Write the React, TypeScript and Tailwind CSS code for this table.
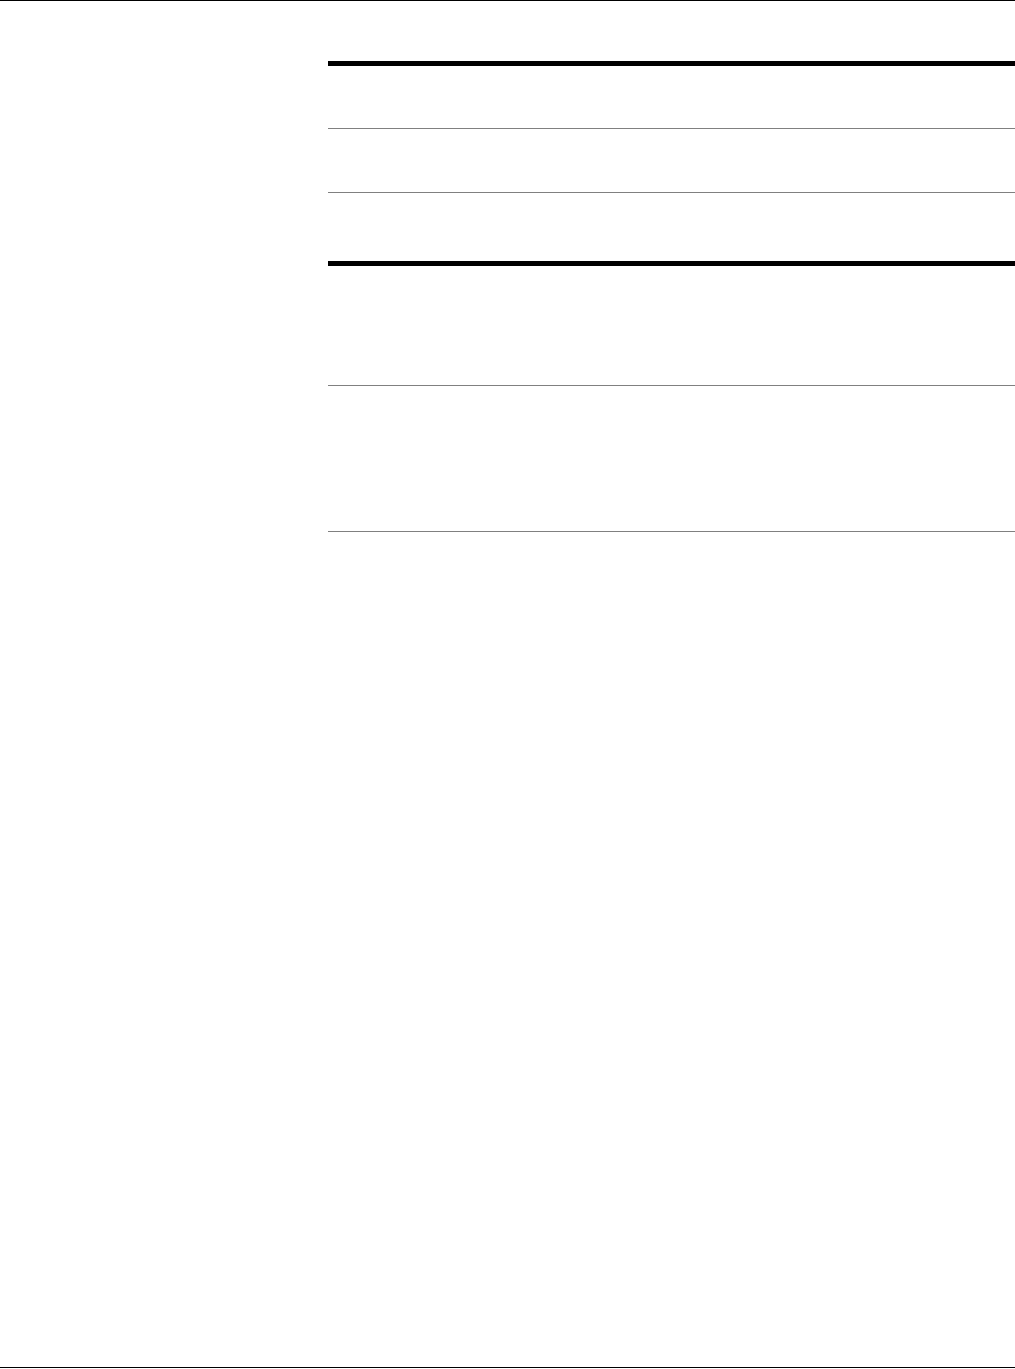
export default function App() {
  return (
    <div className="flex h-[1369px] flex-col bg-white">
      <div className="h-px bg-black" />

      <div className="ml-[328px] mt-[60px]">
        <div className="border-t-[5px] border-black">
          <div className="h-[63px] border-b border-[#808080]" />
          <div className="h-[64px] border-b border-[#808080]" />
          <div className="h-[68px]" />
        </div>
        <div className="border-t-[5px] border-black">
          <div className="h-[120px] border-b border-[#808080]" />
          <div className="h-[146px] border-b border-[#808080]" />
        </div>
      </div>

      <div className="mb-px mt-auto h-px bg-black" />
    </div>
  )
}
